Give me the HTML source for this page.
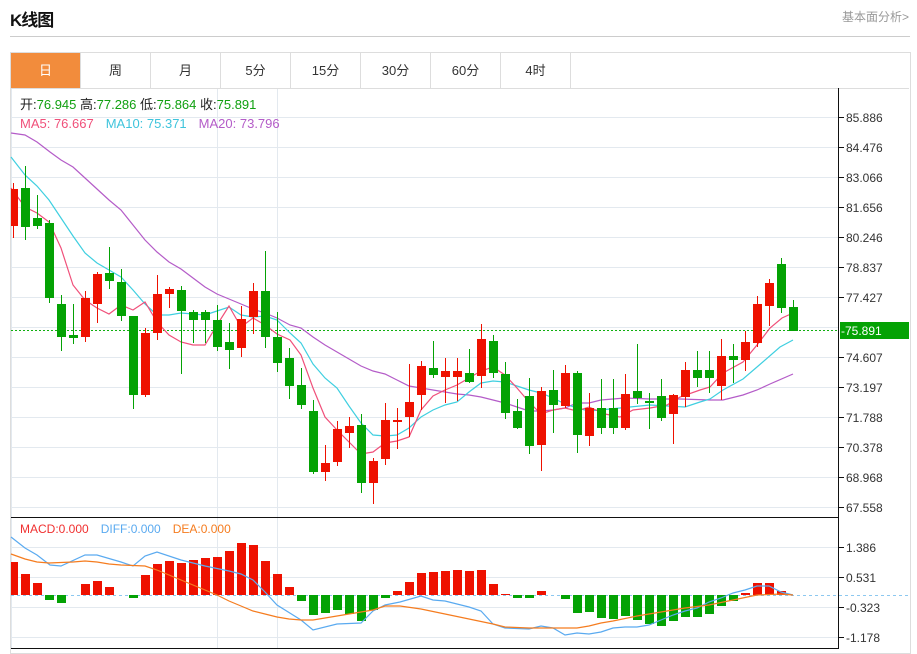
<!DOCTYPE html>
<html><head><meta charset="utf-8"><style>
body{margin:0;width:917px;height:649px;background:#fff;overflow:hidden;font-family:"Liberation Sans","Noto Sans CJK SC",sans-serif;position:relative}
.t{position:absolute;left:10px;top:6px;font-size:17px;font-weight:bold;color:#111;letter-spacing:-1px}
.m{position:absolute;right:8px;top:8px;font-size:12px;color:#999}
.hl{position:absolute;left:10px;top:36px;width:900px;height:1px;background:#ccc}
.box{position:absolute;left:10px;top:52px;width:899px;height:600px;border:1px solid #ddd}
.tabs{position:absolute;left:11px;top:53px;height:35px;display:flex;border-bottom:1px solid #ddd;width:898px}
.tabs div{width:70px;height:35px;line-height:35px;text-align:center;font-size:13px;color:#333;border-right:1px solid #ddd;box-sizing:border-box}
.tabs .a{background:#f28c3c;color:#fff}
svg{position:absolute;left:0;top:0}
</style></head><body>
<div class="t">K线图</div><div class="m">基本面分析&gt;</div><div class="hl"></div>
<div class="box"></div>
<div class="tabs"><div class="a">日</div><div>周</div><div>月</div><div>5分</div><div>15分</div><div>30分</div><div>60分</div><div>4时</div></div>
<svg width="917" height="649" font-family="Liberation Sans,Noto Sans CJK SC,sans-serif">
<g stroke="#e3e9ef" stroke-width="1">
<path d="M11 117.5H839M11 147.5H839M11 177.5H839M11 207.5H839M11 237.5H839M11 267.5H839M11 297.5H839M11 327.5H839M11 357.5H839M11 387.5H839M11 417.5H839M11 447.5H839M11 477.5H839M11 507.5H839M11 547.5H839M11 577.5H839M11 607.5H839M11 637.5H839M217.5 89V649M277.5 89V649M11.5 89V649"/>
</g>
<path d="M11 595.5H909" stroke="#8cc8f0" stroke-dasharray="3,3"/>
<path d="M11 330.5H838" stroke="#10b010" stroke-dasharray="2,2"/>
<g fill="none" stroke-width="1.2">
<polyline stroke="#b45cc8" points="11,133 25,135 37,142 50,152 61,160 73,167 85,178 97,189 109,200 121,210 133,225 145,240 157,252 169,262 181,269 193,278 205,287 217,294 229,299 241,304 253,309 265,313 277,318 290,325 301,328 313,337 325,345 337,352 349,359 361,366 373,371 385,374 397,380 409,386 421,388 433,390 445,392 457,394 469,395 481,397 493,400 505,403 517,407 529,411 541,411 553,410 565,408 577,403 589,403 601,400 625,398 650,399 680,399 710,400 723,400 743,395 757,390 770,384 793,374"/>
<polyline stroke="#3fcfe0" points="11,157 25,175 37,186 49,200 61,218 73,236 85,253 97,263 109,270 121,277 133,290 145,304 157,315 169,315 181,313 193,314 205,315 217,311 229,307 241,315 253,317 265,316 277,320 290,333 301,343 313,364 325,378 337,388 349,406 361,423 373,435 385,436 397,435 409,428 421,417 433,410 445,405 457,402 469,392 481,383 493,381 505,382 517,386 529,390 541,393 553,398 565,404 577,408 589,411 600,410 650,405 685,407 700,402 710,399 723,390 743,379 757,367 780,347 793,340"/>
<polyline stroke="#f0507a" points="11,188 25,207 37,213 49,222 61,248 73,285 85,300 97,308 109,314 121,305 133,310 145,302 157,322 169,335 181,342 193,345 205,345 217,325 229,306 241,327 253,318 265,325 277,334 290,340 301,355 313,388 325,417 337,430 361,454 373,452 385,443 397,441 409,437 421,410 433,396 445,390 457,385 469,378 481,371 493,367 505,375 517,388 529,402 541,414 553,410 565,408 577,411 589,407 605,414 620,417 633,410 650,408 667,405 680,397 700,390 710,387 723,373 743,362 757,345 770,328 782,318 793,313"/>
</g>
<path stroke="#ee1100" d="M13.5 183V238M85.5 291V342M97.5 272V323M145.5 328V397M157.5 275V340M169.5 287V308M241.5 306V357M253.5 283V334M325.5 445V481M337.5 421V466M349.5 417V448M373.5 458V504M385.5 403V465M397.5 408V449M409.5 364V437M421.5 361V410M445.5 358V403M457.5 358V401M481.5 324V388M541.5 387V471M565.5 365V408M589.5 393V446M625.5 374V430M673.5 394V444M685.5 362V407M721.5 339V400M745.5 331V371M757.5 296V347M769.5 279V326"/>
<g fill="#ee1100">
<rect x="11" y="189" width="7" height="37"/><rect x="81" y="298" width="9" height="39"/><rect x="93" y="274" width="9" height="30"/><rect x="141" y="333" width="9" height="62"/><rect x="153" y="294" width="9" height="39"/><rect x="165" y="289" width="9" height="5"/><rect x="237" y="319" width="9" height="29"/><rect x="249" y="291" width="9" height="26"/><rect x="321" y="463" width="9" height="9"/><rect x="333" y="429" width="9" height="33"/><rect x="345" y="426" width="9" height="7"/><rect x="369" y="461" width="9" height="22"/><rect x="381" y="420" width="9" height="39"/><rect x="393" y="420" width="9" height="2"/><rect x="405" y="402" width="9" height="15"/><rect x="417" y="366" width="9" height="29"/><rect x="441" y="371" width="9" height="6"/><rect x="453" y="371" width="9" height="6"/><rect x="477" y="339" width="9" height="37"/><rect x="537" y="391" width="9" height="54"/><rect x="561" y="373" width="9" height="33"/><rect x="585" y="408" width="9" height="28"/><rect x="621" y="394" width="9" height="34"/><rect x="669" y="395" width="9" height="19"/><rect x="681" y="370" width="9" height="27"/><rect x="717" y="356" width="9" height="30"/><rect x="741" y="342" width="9" height="18"/><rect x="753" y="304" width="9" height="39"/><rect x="765" y="283" width="9" height="23"/>
</g>
<path stroke="#04a204" d="M25.5 166V240M37.5 195V229M49.5 220V303M61.5 295V351M73.5 304V344M109.5 247V289M121.5 269V321M133.5 316V409M181.5 286V374M193.5 310V343M205.5 310V343M217.5 305V351M229.5 323V369M265.5 251V348M277.5 312V372M289.5 348V399M301.5 368V409M313.5 400V474M361.5 414V493M433.5 341V378M469.5 349V383M493.5 335V378M505.5 362V419M517.5 399V429M529.5 378V454M553.5 370V433M577.5 371V453M601.5 379V434M613.5 379V434M637.5 344V404M649.5 393V429M661.5 379V421M697.5 351V387M709.5 351V393M733.5 344V383M781.5 258V313M793.5 300V331"/>
<g fill="#04a204">
<rect x="21" y="188" width="9" height="39"/><rect x="33" y="218" width="9" height="8"/><rect x="45" y="223" width="9" height="75"/><rect x="57" y="304" width="9" height="33"/><rect x="69" y="335" width="9" height="3"/><rect x="105" y="273" width="9" height="8"/><rect x="117" y="282" width="9" height="34"/><rect x="129" y="316" width="9" height="79"/><rect x="177" y="290" width="9" height="21"/><rect x="189" y="312" width="9" height="8"/><rect x="201" y="312" width="9" height="8"/><rect x="213" y="320" width="9" height="27"/><rect x="225" y="342" width="9" height="8"/><rect x="261" y="291" width="9" height="46"/><rect x="273" y="337" width="9" height="26"/><rect x="285" y="358" width="9" height="28"/><rect x="297" y="385" width="9" height="20"/><rect x="309" y="411" width="9" height="61"/><rect x="357" y="425" width="9" height="58"/><rect x="429" y="368" width="9" height="7"/><rect x="465" y="373" width="9" height="9"/><rect x="489" y="341" width="9" height="32"/><rect x="501" y="374" width="9" height="39"/><rect x="513" y="411" width="9" height="17"/><rect x="525" y="396" width="9" height="50"/><rect x="549" y="390" width="9" height="15"/><rect x="573" y="373" width="9" height="62"/><rect x="597" y="408" width="9" height="20"/><rect x="609" y="408" width="9" height="20"/><rect x="633" y="391" width="9" height="7"/><rect x="645" y="401" width="9" height="2"/><rect x="657" y="396" width="9" height="22"/><rect x="693" y="370" width="9" height="8"/><rect x="705" y="370" width="9" height="8"/><rect x="729" y="356" width="9" height="4"/><rect x="777" y="264" width="9" height="44"/><rect x="789" y="307" width="9" height="24"/>
</g>
<g fill="#ee1100">
<rect x="11" y="562" width="7" height="33"/><rect x="21" y="574" width="9" height="21"/><rect x="33" y="583" width="9" height="12"/><rect x="81" y="584" width="9" height="11"/><rect x="93" y="581" width="9" height="14"/><rect x="105" y="587" width="9" height="8"/><rect x="141" y="575" width="9" height="20"/><rect x="153" y="564" width="9" height="31"/><rect x="165" y="561" width="9" height="34"/><rect x="177" y="563" width="9" height="32"/><rect x="189" y="560" width="9" height="35"/><rect x="201" y="558" width="9" height="37"/><rect x="213" y="557" width="9" height="38"/><rect x="225" y="551" width="9" height="44"/><rect x="237" y="543" width="9" height="52"/><rect x="249" y="545" width="9" height="50"/><rect x="261" y="561" width="9" height="34"/><rect x="273" y="574" width="9" height="21"/><rect x="285" y="587" width="9" height="8"/><rect x="393" y="591" width="9" height="4"/><rect x="405" y="582" width="9" height="13"/><rect x="417" y="573" width="9" height="22"/><rect x="429" y="572" width="9" height="23"/><rect x="441" y="571" width="9" height="24"/><rect x="453" y="570" width="9" height="25"/><rect x="465" y="571" width="9" height="24"/><rect x="477" y="570" width="9" height="25"/><rect x="489" y="584" width="9" height="11"/><rect x="501" y="594" width="9" height="1"/><rect x="537" y="591" width="9" height="4"/><rect x="741" y="593" width="9" height="2"/><rect x="753" y="583" width="9" height="12"/><rect x="765" y="583" width="9" height="12"/><rect x="777" y="591" width="9" height="4"/>
</g>
<g fill="#04a204">
<rect x="45" y="595" width="9" height="5"/><rect x="57" y="595" width="9" height="8"/><rect x="129" y="595" width="9" height="3"/><rect x="297" y="595" width="9" height="6"/><rect x="309" y="595" width="9" height="20"/><rect x="321" y="595" width="9" height="18"/><rect x="333" y="595" width="9" height="15"/><rect x="345" y="595" width="9" height="19"/><rect x="357" y="595" width="9" height="26"/><rect x="369" y="595" width="9" height="15"/><rect x="381" y="595" width="9" height="3"/><rect x="513" y="595" width="9" height="3"/><rect x="525" y="595" width="9" height="3"/><rect x="561" y="595" width="9" height="4"/><rect x="573" y="595" width="9" height="18"/><rect x="585" y="595" width="9" height="17"/><rect x="597" y="595" width="9" height="23"/><rect x="609" y="595" width="9" height="24"/><rect x="621" y="595" width="9" height="21"/><rect x="633" y="595" width="9" height="25"/><rect x="645" y="595" width="9" height="29"/><rect x="657" y="595" width="9" height="31"/><rect x="669" y="595" width="9" height="26"/><rect x="681" y="595" width="9" height="22"/><rect x="693" y="595" width="9" height="22"/><rect x="705" y="595" width="9" height="19"/><rect x="717" y="595" width="9" height="11"/><rect x="729" y="595" width="9" height="6"/>
</g>
<g fill="none" stroke-width="1.2">
<polyline stroke="#5aaaf0" points="11,537 25,548 37,555 50,565 61,566 85,555 97,555 121,562 133,566 145,556 157,552 181,560 205,566 229,571 241,574 253,580 265,592 277,605 301,620 313,630 337,624 361,623 373,611 385,605 400,602 421,596 433,600 445,601 469,607 481,611 493,624 505,628 529,629 541,626 553,628 565,635 577,633 589,634 601,632 613,628 625,627 637,627 649,625 661,620 673,615 685,611 697,608 709,602 721,598 733,593 745,590 757,586 769,586 781,592 793,595"/>
<polyline stroke="#f57c1f" points="11,554 25,559 37,562 49,563 73,562 85,561 97,562 109,564 121,565 145,566 157,570 169,575 181,580 193,585 205,590 217,595 229,601 241,606 253,611 265,614 277,617 289,619 301,620 313,620 325,618 337,616 349,614 361,612 373,610 385,606 400,606 421,609 445,614 469,619 493,624 505,627 529,628 577,628 589,626 601,623 613,621 637,616 661,612 685,608 709,605 733,600 757,595 781,594 793,595"/>
</g>
<path d="M11 517.5H839M11 648.5H839M838.5 88V649" stroke="#111" stroke-width="1"/>
<path stroke="#111" d="M839 117.5h5M839 147.5h5M839 177.5h5M839 207.5h5M839 237.5h5M839 267.5h5M839 297.5h5M839 357.5h5M839 387.5h5M839 417.5h5M839 447.5h5M839 477.5h5M839 507.5h5M839 547.5h5M839 577.5h5M839 607.5h5M839 637.5h5"/>
<g font-size="12" fill="#333">
<text x="846" y="122">85.886</text><text x="846" y="152">84.476</text><text x="846" y="182">83.066</text><text x="846" y="212">81.656</text><text x="846" y="242">80.246</text><text x="846" y="272">78.837</text><text x="846" y="302">77.427</text><text x="846" y="362">74.607</text><text x="846" y="392">73.197</text><text x="846" y="422">71.788</text><text x="846" y="452">70.378</text><text x="846" y="482">68.968</text><text x="846" y="512">67.558</text>
<text x="846" y="552">1.386</text><text x="846" y="582">0.531</text><text x="846" y="612">-0.323</text><text x="846" y="642">-1.178</text>
</g>
<rect x="840" y="322" width="69" height="17" fill="#04a204"/>
<text x="841" y="335" font-size="12" fill="#fff">-75.891</text>
<g font-size="13">
<text x="20" y="109" fill="#222">开:<tspan fill="#10a010">76.945</tspan>  高:<tspan fill="#10a010">77.286</tspan>  低:<tspan fill="#10a010">75.864</tspan>  收:<tspan fill="#10a010">75.891</tspan></text>
<text x="20" y="128"><tspan fill="#f0507a">MA5: 76.667</tspan><tspan fill="#3fc4dc" dx="12">MA10: 75.371</tspan><tspan fill="#b45cc8" dx="12">MA20: 73.796</tspan></text>
<text x="20" y="533" font-size="12"><tspan fill="#f03030">MACD:0.000</tspan><tspan fill="#5aaaf0" dx="12">DIFF:0.000</tspan><tspan fill="#f57c1f" dx="12">DEA:0.000</tspan></text>
</g>
</svg>
</body></html>
